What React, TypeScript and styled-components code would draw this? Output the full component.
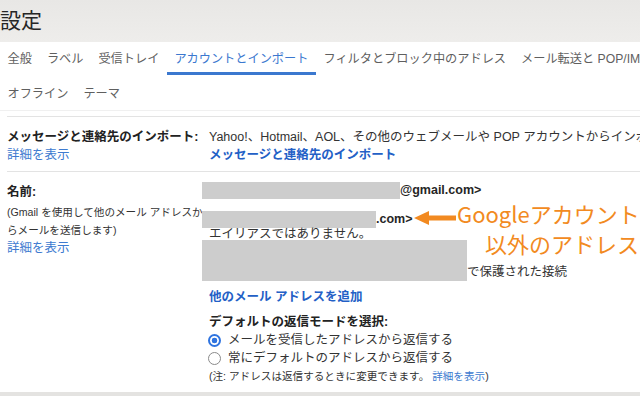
import React from "react";
import styled, { createGlobalStyle } from "styled-components";

const GlobalStyle = createGlobalStyle`
  html, body {
    margin: 0;
    padding: 0;
    background: #fff;
  }
  body {
    width: 640px;
    height: 396px;
    overflow: hidden;
    font-family: "Liberation Sans", "Noto Sans CJK JP", sans-serif;
    color: #222;
  }
`;

const palette = {
  text: "#222",
  tab: "#5f5f5f",
  activeTab: "#3b78cf",
  link: "#3d7bd0",
  strongLink: "#2360c6",
  line: "#e3e3e3",
  redact: "#cdcdcd",
  orange: "#f28a21",
};

const Page = styled.div`
  position: relative;
  width: 640px;
  height: 396px;
  overflow: hidden;
  display: flex;
  flex-direction: column;
`;

const Header = styled.header`
  flex: none;
  height: 42px;
  display: flex;
  align-items: center;
  background: linear-gradient(#e8e7e5, #eeedeb);
`;

const Title = styled.h1`
  margin: 0 0 4px 0;
  font-size: 21px;
  font-weight: 400;
  color: #262626;
`;

const TabBar = styled.nav`
  flex: none;
  border-bottom: 1px solid #f0f0f0;
`;

const TabRow = styled.div<{ $gap?: number }>`
  display: flex;
  white-space: nowrap;
  margin-top: ${(p) => p.$gap ?? 0}px;
`;

const Tab = styled.div<{ $active?: boolean }>`
  box-sizing: border-box;
  height: 33px;
  padding: 4px 7.5px 0;
  line-height: 26px;
  font-size: 12.2px;
  color: ${(p) => (p.$active ? palette.activeTab : palette.tab)};
  border-bottom: 3px solid ${(p) => (p.$active ? palette.activeTab : "transparent")};
`;

const Settings = styled.div`
  flex: none;
  margin: 5px 0 0 7px;
  width: 900px;
`;

const Row = styled.div<{ $top: number; $bottom: number }>`
  display: grid;
  grid-template-columns: 195px 1fr;
  border-top: 1px solid ${palette.line};
  padding: ${(p) => p.$top}px 0 ${(p) => p.$bottom}px;
  font-size: 12.5px;
  line-height: 18px;
`;

const LabelCell = styled.div<{ $shift?: number }>`
  padding-top: ${(p) => p.$shift ?? 0}px;
  white-space: nowrap;
`;

const LabelTitle = styled.div`
  font-weight: 700;
`;

const Hint = styled.div`
  margin: 2px 0 0;
  font-size: 10.6px;
  color: #333;
`;

const MoreLink = styled.a`
  color: ${palette.link};
  text-decoration: none;
`;

const ValueCell = styled.div`
  padding-left: 7px;
  white-space: nowrap;
`;

const StrongLink = styled.a<{ $gap?: number }>`
  display: block;
  margin-top: ${(p) => p.$gap ?? 0}px;
  font-weight: 700;
  color: ${palette.strongLink};
  text-decoration: none;
`;

const AddressLine = styled.div<{ $gap?: number }>`
  display: flex;
  align-items: center;
  height: 18px;
  margin-top: ${(p) => p.$gap ?? 0}px;
  font-weight: 700;
  color: #262626;
`;

const Redacted = styled.span<{ $w: number; $h: number }>`
  flex: none;
  display: inline-block;
  width: ${(p) => p.$w}px;
  height: ${(p) => p.$h}px;
  margin-left: -7px;
  background: ${palette.redact};
`;

const Plain = styled.div<{ $gap?: number }>`
  margin-top: ${(p) => p.$gap ?? 0}px;
  color: #333;
`;

const ServerLine = styled.div`
  display: flex;
  align-items: flex-end;
  margin-top: -3px;
  color: #333;
  line-height: 18px;
`;

const SectionTitle = styled.div<{ $gap?: number }>`
  margin-top: ${(p) => p.$gap ?? 0}px;
  font-weight: 700;
`;

const RadioLine = styled.label`
  display: flex;
  align-items: center;
  color: #333;
`;

const Radio = styled.span<{ $checked?: boolean }>`
  box-sizing: border-box;
  flex: none;
  width: 13px;
  height: 13px;
  margin: 0 7px 0 -1px;
  border-radius: 50%;
  border: ${(p) => (p.$checked ? "2px solid #2f74e0" : "1px solid #8a8a8a")};
  background: ${(p) =>
    p.$checked
      ? "radial-gradient(circle, #2f74e0 0 2.6px, #fff 3.1px)"
      : "#fff"};
`;

const Note = styled.div`
  font-size: 10.6px;
  color: #333;
`;

const Annotation = styled.div`
  position: absolute;
  left: 414px;
  top: 198px;
  display: flex;
  align-items: flex-start;
  font-family: "Noto Sans CJK JP", sans-serif;
  font-size: 22px;
  line-height: 30px;
  color: ${palette.orange};
  white-space: nowrap;
`;

const ArrowIcon = styled.svg`
  flex: none;
  margin-top: 13px;
`;

const AnnotationText = styled.div`
  margin-left: 1px;
`;

const AnnotationLine = styled.div<{ $indent?: number }>`
  padding-left: ${(p) => p.$indent ?? 0}px;
`;

const Footer = styled.div`
  flex: none;
  height: 4px;
  margin-top: auto;
  background: #e4e3e1;
`;

const topTabs = [
  "全般",
  "ラベル",
  "受信トレイ",
  "アカウントとインポート",
  "フィルタとブロック中のアドレス",
  "メール転送と POP/IMAP",
];
const moreTabs = ["オフライン", "テーマ"];

const App: React.FC = () => {
  return (
    <Page>
      <GlobalStyle />
      <Header>
        <Title>設定</Title>
      </Header>
      <TabBar>
        <TabRow>
          {topTabs.map((t) => (
            <Tab key={t} $active={t === "アカウントとインポート"}>
              {t}
            </Tab>
          ))}
        </TabRow>
        <TabRow $gap={2}>
          {moreTabs.map((t) => (
            <Tab key={t}>{t}</Tab>
          ))}
        </TabRow>
      </TabBar>
      <Settings>
        <Row $top={11} $bottom={7}>
          <LabelCell>
            <LabelTitle>メッセージと連絡先のインポート:</LabelTitle>
            <MoreLink>詳細を表示</MoreLink>
          </LabelCell>
          <ValueCell>
            <Plain>
              Yahoo!、Hotmail、AOL、その他のウェブメールや POP アカウントからインポートします。
            </Plain>
            <StrongLink>メッセージと連絡先のインポート</StrongLink>
          </ValueCell>
        </Row>
        <Row $top={9} $bottom={6}>
          <LabelCell $shift={2}>
            <LabelTitle>名前:</LabelTitle>
            <Hint>
              (Gmail を使用して他のメール アドレスか
              <br />
              らメールを送信します)
            </Hint>
            <MoreLink>詳細を表示</MoreLink>
          </LabelCell>
          <ValueCell>
            <AddressLine>
              <Redacted $w={198} $h={17} />
              @gmail.com&gt;
            </AddressLine>
            <AddressLine $gap={11}>
              <Redacted $w={174} $h={17} />
              .com&gt;
            </AddressLine>
            <Plain $gap={-3}>エイリアスではありません。</Plain>
            <ServerLine>
              <Redacted $w={265} $h={41} />
              で保護された接続
            </ServerLine>
            <StrongLink $gap={7}>他のメール アドレスを追加</StrongLink>
            <SectionTitle $gap={7}>デフォルトの返信モードを選択:</SectionTitle>
            <RadioLine>
              <Radio $checked />
              メールを受信したアドレスから返信する
            </RadioLine>
            <RadioLine>
              <Radio />
              常にデフォルトのアドレスから返信する
            </RadioLine>
            <Note>
              (注: アドレスは返信するときに変更できます。 <MoreLink>詳細を表示</MoreLink>)
            </Note>
          </ValueCell>
        </Row>
      </Settings>
      <Annotation>
        <ArrowIcon width="42" height="14" viewBox="0 0 42 14">
          <polygon points="0,7 15,0 15,14" fill={palette.orange} />
          <rect x="14" y="4.5" width="28" height="5" fill={palette.orange} />
        </ArrowIcon>
        <AnnotationText>
          <AnnotationLine>Googleアカウント</AnnotationLine>
          <AnnotationLine $indent={28}>以外のアドレス</AnnotationLine>
        </AnnotationText>
      </Annotation>
      <Footer />
    </Page>
  );
};

export default App;
